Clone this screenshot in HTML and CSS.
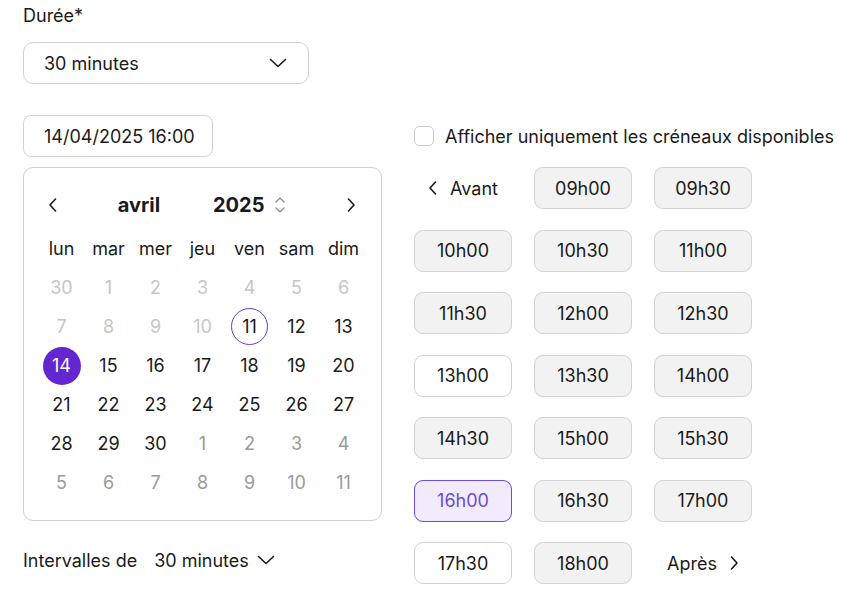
FILE: index.html
```html
<!DOCTYPE html>
<html lang="fr">
<head>
<meta charset="UTF-8">
<meta name="viewport" content="width=device-width, initial-scale=1.0">
<title>Créneau</title>
<link rel="stylesheet" href="styles.css">
</head>
<body>
    <div class="page">
        <label class="field-label">Durée*</label>
        <button class="select">
            <span>30 minutes</span>
            <svg class="chev-down" width="18" height="10" viewBox="0 0 18 10"><path d="M1.5 1.5 L9 8.5 L16.5 1.5" fill="none" stroke="#1a1a1a" stroke-width="1.6" stroke-linecap="round" stroke-linejoin="round"/></svg>
        </button>

        <div class="picker">
            <div class="left-col">
                <div class="date-input">14/04/2025 16:00</div>

                <div class="calendar">
                    <div class="cal-header">
                        <button class="cal-nav">
                            <svg width="10" height="16" viewBox="0 0 10 16"><path d="M7.5 2 L2 8 L7.5 14" fill="none" stroke="#1a1a1a" stroke-width="1.6" stroke-linecap="round" stroke-linejoin="round"/></svg>
                        </button>
                        <span class="cal-month">avril</span>
                        <span class="cal-year">2025
                            <svg width="12" height="20" viewBox="0 0 12 20"><path d="M2 7 L6 3 L10 7 M2 13 L6 17 L10 13" fill="none" stroke="#8a8a8a" stroke-width="1.2" stroke-linecap="round" stroke-linejoin="round"/></svg>
                        </span>
                        <span class="spacer"></span>
                        <button class="cal-nav">
                            <svg width="10" height="16" viewBox="0 0 10 16"><path d="M2.5 2 L8 8 L2.5 14" fill="none" stroke="#1a1a1a" stroke-width="1.6" stroke-linecap="round" stroke-linejoin="round"/></svg>
                        </button>
                    </div>
                    <div class="cal-grid" id="cal-grid">
                        <span class="wd">lun</span><span class="wd">mar</span><span class="wd">mer</span><span class="wd">jeu</span><span class="wd">ven</span><span class="wd">sam</span><span class="wd">dim</span>
                    </div>
                </div>

                <div class="interval">
                    <span>Intervalles de</span>
                    <button class="interval-select">
                        <span>30 minutes</span>
                        <svg width="18" height="10" viewBox="0 0 18 10"><path d="M1.5 1.5 L9 8.5 L16.5 1.5" fill="none" stroke="#1a1a1a" stroke-width="1.6" stroke-linecap="round" stroke-linejoin="round"/></svg>
                    </button>
                </div>
            </div>

            <div class="right-col">
                <label class="check-row">
                    <span class="checkbox"></span>
                    <span>Afficher uniquement les créneaux disponibles</span>
                </label>
                <div class="slots" id="slots"></div>
            </div>
        </div>
    </div>

<script>
document.addEventListener('DOMContentLoaded', () => {
    // Calendar days: avril 2025, starting Monday 31 mars
    const grid = document.getElementById('cal-grid');
    const days = [];
    days.push({ n: 30, cls: 'past' });
    for (let i = 1; i <= 10; i++) days.push({ n: i, cls: 'past' });
    for (let i = 11; i <= 30; i++) days.push({ n: i, cls: '' });
    for (let i = 1; i <= 11; i++) days.push({ n: i, cls: 'next' });

    days.forEach((d, idx) => {
        const cell = document.createElement('span');
        cell.className = 'day ' + d.cls;
        if (idx === 11) cell.classList.add('today');
        if (idx === 14) cell.classList.add('selected');
        cell.innerHTML = '<span>' + d.n + '</span>';
        grid.appendChild(cell);
    });

    // Time slots
    const slots = document.getElementById('slots');
    const items = [
        { t: 'prev' }, { t: '09h00' }, { t: '09h30' },
        { t: '10h00' }, { t: '10h30' }, { t: '11h00' },
        { t: '11h30' }, { t: '12h00' }, { t: '12h30' },
        { t: '13h00', free: true }, { t: '13h30' }, { t: '14h00' },
        { t: '14h30' }, { t: '15h00' }, { t: '15h30' },
        { t: '16h00', active: true }, { t: '16h30' }, { t: '17h00' },
        { t: '17h30', free: true }, { t: '18h00' }, { t: 'next' }
    ];
    const left = '<svg width="10" height="16" viewBox="0 0 10 16"><path d="M7.5 2 L2 8 L7.5 14" fill="none" stroke="#1a1a1a" stroke-width="1.6" stroke-linecap="round" stroke-linejoin="round"/></svg>';
    const right = '<svg width="10" height="16" viewBox="0 0 10 16"><path d="M2.5 2 L8 8 L2.5 14" fill="none" stroke="#1a1a1a" stroke-width="1.6" stroke-linecap="round" stroke-linejoin="round"/></svg>';

    items.forEach(item => {
        const el = document.createElement('button');
        if (item.t === 'prev') {
            el.className = 'slot-nav';
            el.innerHTML = left + '<span>Avant</span>';
        } else if (item.t === 'next') {
            el.className = 'slot-nav';
            el.innerHTML = '<span>Après</span>' + right;
        } else {
            el.className = 'slot';
            if (item.free) el.classList.add('free');
            if (item.active) el.classList.add('active');
            el.textContent = item.t;
        }
        slots.appendChild(el);
    });
});
</script>
</body>
</html>
```

FILE: styles.css
```css
/* Base */
body {
    margin: 0;
    font-family: Inter, "Noto Sans", sans-serif;
    font-size: 18px;
    color: #1a1a1a;
    background-color: #fff;
}

button {
    font: inherit;
    color: inherit;
    background: none;
    border: none;
    padding: 0;
    cursor: pointer;
}

.page {
    padding: 6px 0 0 23px;
}

.field-label {
    display: block;
    line-height: 20px;
}

/* Duration select */
.select {
    margin-top: 16px;
    width: 286px;
    height: 42px;
    box-sizing: border-box;
    border: 1px solid #d2d2d2;
    border-radius: 10px;
    display: flex;
    align-items: center;
    justify-content: space-between;
    padding: 0 21px 0 20px;
}

.picker {
    margin-top: 31px;
    display: grid;
    grid-template-columns: 359px auto;
    column-gap: 32px;
    align-items: start;
}

.date-input {
    width: 190px;
    height: 42px;
    box-sizing: border-box;
    border: 1px solid #d2d2d2;
    border-radius: 8px;
    display: flex;
    align-items: center;
    padding-left: 20px;
}

/* Calendar */
.calendar {
    margin-top: 10px;
    height: 354px;
    box-sizing: border-box;
    border: 1px solid #d2d2d2;
    border-radius: 10px;
    padding: 17px 14px 0;
}

.cal-header {
    display: flex;
    align-items: center;
    height: 40px;
    margin-bottom: 4px;
    padding: 0 4px 0 3px;
}

.cal-nav {
    width: 24px;
    height: 24px;
    display: flex;
    align-items: center;
    justify-content: center;
}

.cal-month {
    width: 148px;
    text-align: center;
    font-size: 20px;
    font-weight: 700;
}

.cal-year {
    display: flex;
    align-items: center;
    gap: 10px;
    font-size: 20px;
    font-weight: 700;
}

.spacer {
    flex: 1;
}

.cal-grid {
    display: grid;
    grid-template-columns: repeat(7, 47px);
    grid-auto-rows: 39px;
}

.wd,
.day {
    display: flex;
    align-items: center;
    justify-content: center;
}

.day span {
    width: 37px;
    height: 37px;
    box-sizing: border-box;
    border-radius: 50%;
    display: flex;
    align-items: center;
    justify-content: center;
}

.day.past {
    color: #c6c6c6;
}

.day.next {
    color: #9a9a9a;
}

.day.today span {
    border: 1.5px solid #6a3dd8;
}

.day.selected span {
    width: 38px;
    height: 38px;
    background-color: #6326d0;
    color: #fff;
}

/* Interval */
.interval {
    margin-top: 18px;
    height: 42px;
    display: flex;
    align-items: center;
    gap: 17px;
}

.interval-select {
    display: flex;
    align-items: center;
    gap: 8px;
}

/* Right column */
.check-row {
    height: 42px;
    display: flex;
    align-items: center;
    gap: 11px;
    white-space: nowrap;
}

.checkbox {
    width: 20px;
    height: 20px;
    box-sizing: border-box;
    border: 1.5px solid #c8c8c8;
    border-radius: 5px;
}

.slots {
    margin-top: 10px;
    display: grid;
    grid-template-columns: repeat(3, 98px);
    column-gap: 22px;
    row-gap: 20.5px;
}

.slot {
    height: 42px;
    box-sizing: border-box;
    border: 1px solid #d2d2d2;
    border-radius: 9px;
    background-color: #f2f2f2;
}

.slot.free {
    background-color: #fff;
}

.slot.active {
    background-color: #f2ebfe;
    border-color: #6b48e0;
    color: #6a4bd5;
}

.slot-nav {
    height: 42px;
    display: flex;
    align-items: center;
    justify-content: center;
    gap: 12px;
}
```
